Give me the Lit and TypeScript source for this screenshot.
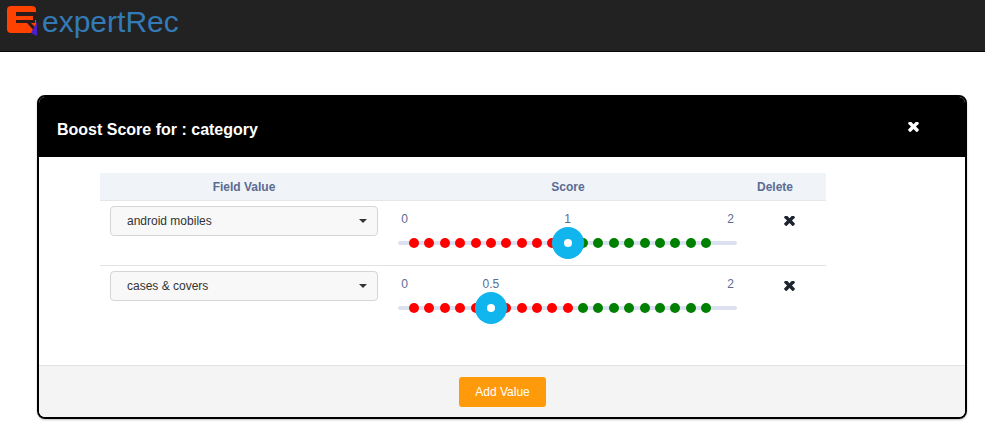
import { LitElement, html, css, svg } from "lit";
import { customElement } from "lit/decorators.js";

const timesPath = "M1298 1214q0 40-28 68l-136 136q-28 28-68 28t-68-28l-294-294-294 294q-28 28-68 28t-68-28l-136-136q-28-28-28-68t28-68l294-294-294-294q-28-28-28-68t28-68l136-136q28-28 68-28t68 28l294 294 294-294q28-28 68-28t68 28l136 136q28 28 28 68t-28 68l-294 294 294 294q28 28 28 68z";

const times = () => html`<svg class="x" viewBox="110 346 1188 1100"><path d=${timesPath} fill="currentColor"></path></svg>`;

const rows = [
  { name: "android mobiles", value: 1 },
  { name: "cases & covers", value: 0.5 },
];

const ticks = Array.from({ length: 20 }, (_, i) => i);

@customElement("app-root")
export class AppRoot extends LitElement {
  static styles = css`
    :host { display: block; width: 985px; height: 423px; overflow: hidden; background: #fff; font-family: "Liberation Sans", Arial, sans-serif; }
    .nav { height: 51px; background: #222; border-bottom: 1px solid #080808; display: flex; align-items: flex-start; padding-left: 7px; box-sizing: content-box; }
    .logo { width: 31px; height: 31px; margin-top: 5px; flex: none; filter: blur(0.4px); }
    .brand { color: #337ab7; font-size: 30px; line-height: 34px; margin: 5px 0 0 4px; }
    .wrap { padding: 43px 18px 0 37px; }
    .modal { border: 2px solid #000; border-radius: 8px; height: 324px; box-sizing: border-box; display: flex; flex-direction: column; overflow: hidden; box-shadow: 0 1px 2px rgba(0,0,0,.25); }
    .head { height: 60px; background: #000; color: #fff; display: flex; align-items: center; justify-content: space-between; padding: 0 46px 0 18px; flex: none; }
    .title { font-size: 16px; font-weight: 700; margin-top: 5px; }
    .head .x { width: 11px; height: 10px; color: #fff; margin-top: -1px; }
    .body { flex: 1; padding: 16px 139px 0 61px; }
    .grid { display: grid; grid-template-columns: 288px 360px 78px; }
    .th { height: 28px; box-sizing: border-box; background: #f0f3f8; border-bottom: 1px solid #e4e6ea; color: #5a6c93; font-size: 12px; font-weight: 700; display: flex; align-items: center; justify-content: center; }
    .th.last { padding-right: 24px; }
    .row { display: contents; }
    .cell { height: 65px; box-sizing: border-box; border-bottom: 1px solid #e3e3e3; }
    .row:last-child .cell { border-bottom: none; }
    .sel-cell { padding: 5px 0 0 10px; }
    .select { width: 268px; height: 30px; box-sizing: border-box; border: 1px solid #d5d5d5; border-radius: 4px; background: #f8f8f8; display: flex; align-items: center; justify-content: space-between; padding: 0 10px 1px 16px; font-size: 12px; color: #333; }
    .caret { width: 0; height: 0; border-left: 4px solid transparent; border-right: 4px solid transparent; border-top: 4px solid #333; margin-top: 1px; }
    .slider-cell { position: relative; }
    .slider { position: absolute; left: 10px; top: 0; width: 339px; height: 64px; }
    .track { position: absolute; left: 0; right: 0; top: 40px; height: 4px; border-radius: 2px; background: #dbe1f1; }
    .dot { position: absolute; top: 37px; width: 10px; height: 10px; border-radius: 50%; }
    .red { background: #f00; }
    .green { background: #008000; }
    .knob { position: absolute; top: 26px; width: 32px; height: 32px; border-radius: 50%; background: #10b5ee; display: flex; align-items: center; justify-content: center; }
    .knob::after { content: ""; width: 8px; height: 8px; background: #fff; border-radius: 50%; }
    .label { position: absolute; top: 12px; font-size: 12px; line-height: 13px; color: #5a6c93; transform: translateX(-50%); }
    .del { display: flex; justify-content: center; padding-top: 15px; color: #1f2430; }
    .del .x { width: 11px; height: 10px; margin-left: 5px; }
    .foot { height: 52px; box-sizing: border-box; background: #f4f4f4; border-top: 1px solid #e3e3e3; display: flex; justify-content: center; align-items: center; flex: none; padding-top: 1px; }
    .btn { width: 87px; height: 30px; border: none; border-radius: 3px; background: #ff9a0b; color: #fff; font: 12px "Liberation Sans", Arial, sans-serif; padding: 0 0 0 1px; }
  `;

  private logo() {
    return html`<svg class="logo" viewBox="0 0 31 31">
      ${svg`<rect x="0" y="1" width="29" height="27" rx="4" fill="#ff4200"></rect>
      <path d="M9 7 H30 V11 H9 Z" fill="#2a1c1c"></path>
      <path d="M26 9 H29 V15 H26 Z" fill="#2a1c1c"></path>
      <path d="M9 15 H28 V18 H9 Z" fill="#2a1c1c"></path>
      <path d="M20 18 H24 L30 24 V28 H29 Z" fill="#2a1c1c"></path>
      <path d="M24 28 L30 17 V31 Z" fill="#4b1fd0"></path>`}
    </svg>`;
  }

  private slider(value: number) {
    const x = (v: number) => 16 + v * 153.7;
    return html`<div class="slider">
      <div class="track"></div>
      ${ticks.map((i) => html`<div class="dot ${i <= 10 ? "red" : "green"}" style="left:${(x(i / 10) - 5).toFixed(1)}px"></div>`)}
      <div class="label" style="left:6.5px">0</div>
      <div class="label" style="left:${x(value)}px">${value}</div>
      <div class="label" style="left:332.5px">2</div>
      <div class="knob" style="left:${x(value) - 16}px"></div>
    </div>`;
  }

  render() {
    return html`
      <div class="nav">${this.logo()}<div class="brand">expertRec</div></div>
      <div class="wrap">
        <div class="modal">
          <div class="head"><div class="title">Boost Score for : category</div>${times()}</div>
          <div class="body">
            <div class="grid">
              <div class="th">Field Value</div>
              <div class="th">Score</div>
              <div class="th last">Delete</div>
              ${rows.map((r) => html`<div class="row">
                <div class="cell sel-cell"><div class="select"><span>${r.name}</span><span class="caret"></span></div></div>
                <div class="cell slider-cell">${this.slider(r.value)}</div>
                <div class="cell del">${times()}</div>
              </div>`)}
            </div>
          </div>
          <div class="foot"><button class="btn">Add Value</button></div>
        </div>
      </div>
    `;
  }
}
